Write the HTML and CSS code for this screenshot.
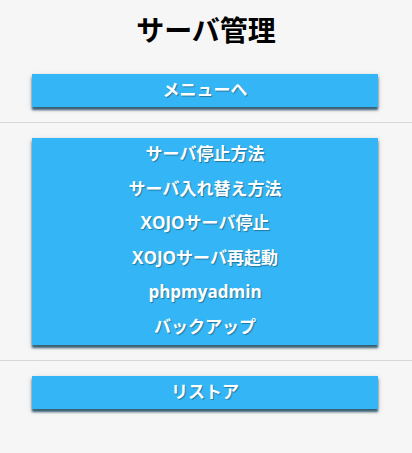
FILE: index.html
```html
<!DOCTYPE html>
<html lang="ja">
<head>
<meta charset="utf-8">
<title>サーバ管理</title>
<link rel="stylesheet" href="styles.css">
</head>
<body>
<h1 class="title">サーバ管理</h1>
<section class="group first">
  <a class="btn" href="#">メニューへ</a>
</section>
<section class="group">
  <div class="menu">
    <a class="item" href="#">サーバ停止方法</a>
    <a class="item" href="#">サーバ入れ替え方法</a>
    <a class="item" href="#">XOJOサーバ停止</a>
    <a class="item" href="#">XOJOサーバ再起動</a>
    <a class="item" href="#">phpmyadmin</a>
    <a class="item" href="#">バックアップ</a>
  </div>
</section>
<section class="group">
  <a class="btn" href="#">リストア</a>
</section>
</body>
</html>
```
FILE: styles.css
```css
html, body {
  margin: 0;
  padding: 0;
  background: #f6f6f6;
}
body {
  font-family: "Open Sans", "Noto Sans CJK JP", sans-serif;
  width: 412px;
}
.title {
  margin: 0;
  padding-top: 13px;
  height: 61px;
  box-sizing: border-box;
  text-align: center;
  font-size: 28px;
  line-height: 34px;
  font-weight: 700;
  color: #000;
}
.group {
  padding: 15px 34px 15px 32px;
  border-top: 1px solid #d8d8d8;
}
.group.first {
  border-top: none;
  padding-top: 13px;
}
.btn, .menu {
  display: block;
  background: #34b6f6;
  box-shadow: 0 3px 2px rgba(10, 60, 90, 0.75), 0 2px 5px rgba(0, 0, 0, 0.25);
}
.btn, .item {
  display: block;
  color: #fff;
  text-decoration: none;
  text-align: center;
  font-size: 17px;
  font-weight: 700;
  text-shadow: 1px 1px 1px rgba(0, 0, 0, 0.35);
}
.btn {
  height: 33px;
  line-height: 32px;
}
.item {
  height: 34.5px;
  line-height: 32px;
}
```
